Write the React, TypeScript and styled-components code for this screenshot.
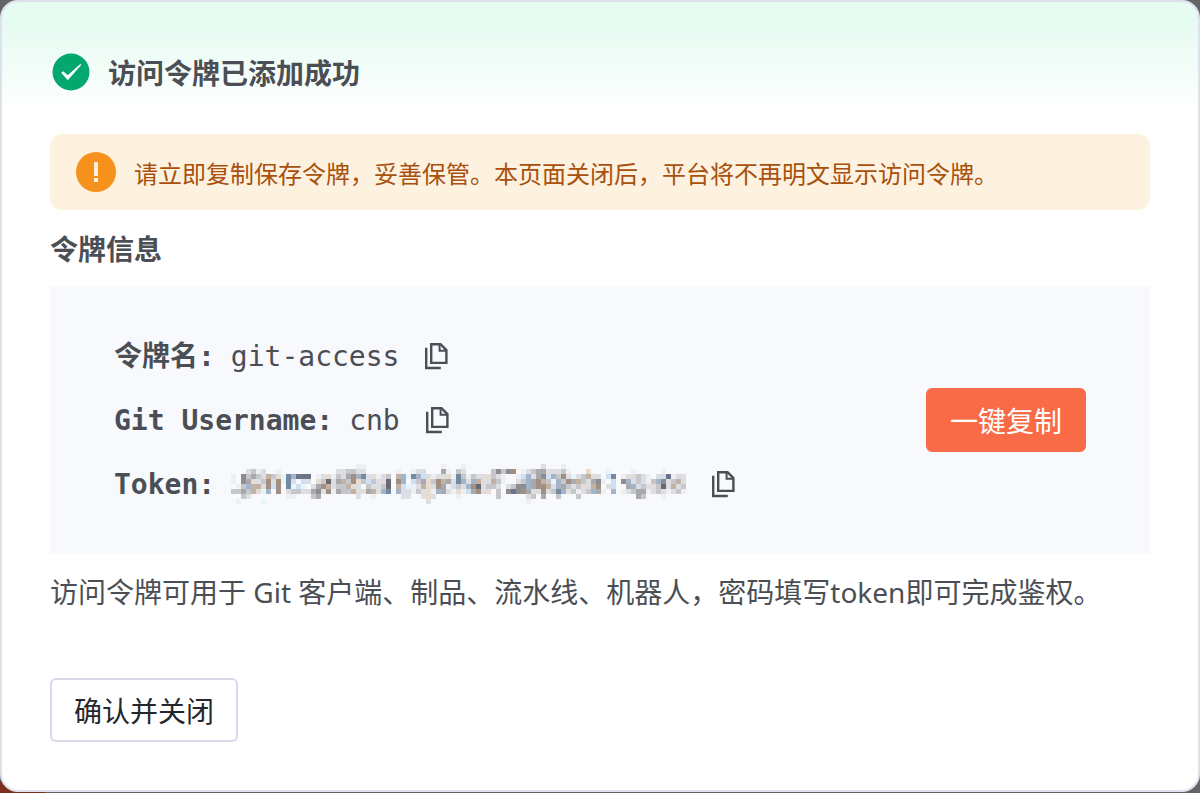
import React from "react";
import styled, { createGlobalStyle } from "styled-components";

const sans = `"Noto Sans", "Noto Sans CJK SC", sans-serif`;
const mono = `"DejaVu Sans Mono", "Noto Sans CJK SC", monospace`;

const GlobalStyle = createGlobalStyle`
  *, *::before, *::after { box-sizing: border-box; }
  html { min-height: 100%; background: #646466 linear-gradient(90deg, #7b2f1c 45px, #646466 45px) left bottom / 100% 12px no-repeat; }
  body { margin: 0; font-family: ${sans}; color: #4b4f55; }
  h1, h2, p, dl, dt, dd { margin: 0; }
`;

const Dialog = styled.main`
  display: flex;
  flex-direction: column;
  align-items: stretch;
  padding: 48px;
  border: 2px solid #dde1ec;
  border-radius: 18px;
  background: #fff linear-gradient(#e6fbf2 0, #e6fbf2 24px, #fff 110px) no-repeat;
`;

const Header = styled.header`
  display: flex;
  align-items: center;
  gap: 17px;
  height: 44px;
  margin-bottom: 40px;
  padding-left: 1px;
`;

const Title = styled.h1`
  font: bold 28px/44px "Noto Sans CJK SC", sans-serif;
`;

const Notice = styled.div`
  display: flex;
  align-items: center;
  gap: 16px;
  height: 76px;
  padding: 0 24px;
  border-radius: 12px;
  background: #fdf2e0;
  color: #a8500c;
  font: 24px/36px "Noto Sans CJK SC", sans-serif;
`;

const NoticeText = styled.p`
  padding-top: 2px;
`;

const Heading = styled.h2`
  margin: 16px 0;
  font: bold 28px/44px "Noto Sans CJK SC", sans-serif;
`;

const Panel = styled.section`
  display: flex;
  align-items: center;
  justify-content: space-between;
  padding: 38px 64px;
  background: #f8f9fd;
`;

const Fields = styled.dl`
  font: 28px/44px ${mono};
`;

const Field = styled.div`
  display: flex;
  align-items: center;
  height: 64px;
`;

const Label = styled.dt`
  margin-right: 16px;
  padding-top: 2px;
  font-weight: bold;
`;

const Value = styled.dd`
  display: flex;
  align-items: center;
  gap: 24px;
`;

const ValueText = styled.span`
  padding-top: 2px;
`;

const IconButton = styled.button`
  display: flex;
  padding: 0;
  border: 0;
  background: none;
  color: #4b4f55;
  cursor: pointer;
`;

const Button = styled.button<{ $primary?: boolean }>`
  height: 64px;
  padding: 0 22px;
  border: 2px solid ${(p) => (p.$primary ? "#f96b46" : "#d5d9e8")};
  border-radius: 6px;
  background: ${(p) => (p.$primary ? "#f96b46" : "#fff")};
  color: ${(p) => (p.$primary ? "#fff" : "#24272b")};
  font: 28px/44px "Noto Sans CJK SC", sans-serif;
  cursor: pointer;
`;

const Hint = styled.p`
  margin: 16px 0 64px;
  font-size: 28px;
  line-height: 44px;
`;

function SuccessIcon() {
  return (
    <svg width="40" height="40" viewBox="0 0 40 40" aria-hidden="true">
      <circle cx="20" cy="20" r="18.5" fill="#04a86e" />
      <path d="M10.2 20.8 12.2 19.2 16.7 23.2 29.3 12 30.2 13 16.8 28.2Z" fill="#fff" />
    </svg>
  );
}

function WarningIcon() {
  return (
    <svg width="44" height="40" viewBox="0 0 44 40" aria-hidden="true">
      <circle cx="22" cy="20" r="20" fill="#f7911e" />
      <path d="M20 10h4v14h-4zM20 26h4v4h-4z" fill="#fdf2e0" />
    </svg>
  );
}

function CopyIcon() {
  return (
    <svg width="28" height="28" viewBox="0 0 28 28" fill="none" stroke="currentColor" strokeWidth="2.4" aria-hidden="true">
      <path d="M8.2 2.2h9.3l5.9 5.9v12.8H8.2z" />
      <path d="M16.6 2.2v6.6h6.8" strokeWidth="2" />
      <path d="M3.2 5.8V26h14.6" />
    </svg>
  );
}

const shades: Record<string, string> = {
  a: "#eeeff2", b: "#dcdee2", c: "#c5c7cb", d: "#a9a9ad", e: "#8c8c91", f: "#6c6870",
  t: "#e6dcd3", u: "#c2b2a3", v: "#a18f83", p: "#cfe0f2", q: "#a3b4c8", r: "#7489a2",
  s: "#6c7488", y: "#e6f4fc",
};

const maskRows = [
  ".........................aa...............a...a...............b...a.........................",
  "...bcab..a...........bbccbb......a..abp...da.cb.....cecev.abcddbbbca...t...y....a.....a.....",
  "a.ecdcbuctyrqsss.abtacbdvqrbtabc.uqyrqpbabbtarcacbbtcba..apqbdepqcvbybcubb.pr.abtcba.bpsabb.",
  "a.edtbcvbvarp.pb.tcfbducvtcpcbbf.vq.pcdtcvudbrqbqubbuca..bcqdvucyqcvducbdea.p.eqbcbacqebcub.",
  ".acquubvpv.rypy.bdvubccutb.cbbcf.upyabutbvdapcbqvfbccb.bceeqdvvubqdcbctbuv.bp..dqbcbtcfbubc.",
  "ccdcutyq.v.bccbbdebvadccubtdubqr.qbbacbtaqdbatapdvbt.c.esevdbbvbcrqbcabcqda.q.abcddabcbabca.",
  "..cb.......aa...cd.......b..a.....bb..btb....a.......c.....bc.d..c...c...........dc...a.....",
  ".a....y................................b...................a................................",
];

function MaskedToken() {
  return (
    <svg width="455" height="40" viewBox="0 0 455 40" shapeRendering="crispEdges" role="img" aria-label="Hidden token">
      {maskRows.flatMap((row, y) =>
        [...row].map((key, x) =>
          shades[key] ? (
            <rect key={`${x}-${y}`} x={x * 5} y={y * 5} width="5" height="5" fill={shades[key]} />
          ) : null,
        ),
      )}
    </svg>
  );
}

const fields: { label: string; value: React.ReactNode }[] = [
  { label: "令牌名:", value: <ValueText>git-access</ValueText> },
  { label: "Git Username:", value: <ValueText>cnb</ValueText> },
  { label: "Token:", value: <MaskedToken /> },
];

export default function App() {
  return (
    <>
      <GlobalStyle />
      <Dialog>
        <Header>
          <SuccessIcon />
          <Title>访问令牌已添加成功</Title>
        </Header>
        <Notice role="alert">
          <WarningIcon />
          <NoticeText>请立即复制保存令牌，妥善保管。本页面关闭后，平台将不再明文显示访问令牌。</NoticeText>
        </Notice>
        <Heading>令牌信息</Heading>
        <Panel>
          <Fields>
            {fields.map(({ label, value }) => (
              <Field key={label}>
                <Label>{label}</Label>
                <Value>
                  {value}
                  <IconButton type="button" aria-label="复制">
                    <CopyIcon />
                  </IconButton>
                </Value>
              </Field>
            ))}
          </Fields>
          <Button type="button" $primary>一键复制</Button>
        </Panel>
        <Hint>访问令牌可用于 Git 客户端、制品、流水线、机器人，密码填写token即可完成鉴权。</Hint>
        <div>
          <Button type="button">确认并关闭</Button>
        </div>
      </Dialog>
    </>
  );
}
